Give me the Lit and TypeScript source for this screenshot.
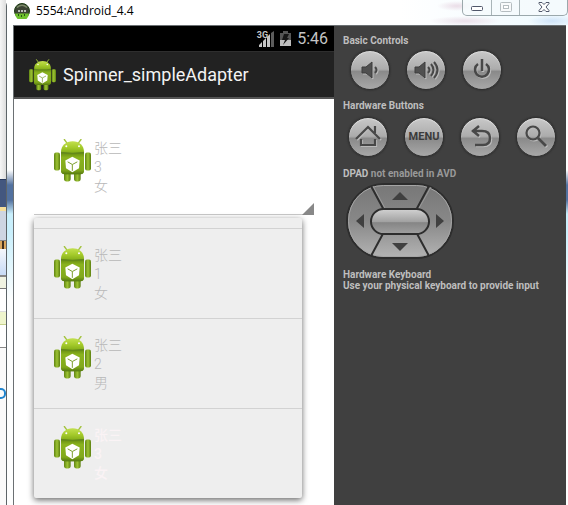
import { LitElement, html, svg, css } from "lit";
import { customElement } from "lit/decorators.js";

const people = [
  { name: "张三", id: "1", sex: "女", pressed: false },
  { name: "张三", id: "2", sex: "男", pressed: false },
  { name: "张三", id: "3", sex: "女", pressed: true },
];

@customElement("android-robot")
class AndroidRobot extends LitElement {
  static styles = css`
    :host { display: block; flex: none; width: 37px; height: 43px; }
    svg { display: block; width: 100%; height: 100%; }
  `;
  render() {
    return html`<svg viewBox="0 0 111 128" aria-hidden="true">
      <defs>
        <linearGradient id="head" x2="0" y2="1"><stop stop-color="#c3e04f"/><stop offset=".55" stop-color="#a5cb2c"/><stop offset="1" stop-color="#86b01a"/></linearGradient>
        <linearGradient id="body" x2="0" y2="1"><stop stop-color="#6d9413"/><stop offset=".2" stop-color="#8ab31e"/><stop offset=".8" stop-color="#82a91c"/><stop offset="1" stop-color="#567a10"/></linearGradient>
        <linearGradient id="arm"><stop stop-color="#5f8412"/><stop offset=".5" stop-color="#9dc333"/><stop offset="1" stop-color="#5c7f10"/></linearGradient>
      </defs>
      <path d="M31 1 39 12M81 1 73 12" stroke="#a3c33f" stroke-width="4" stroke-linecap="round"/>
      <rect x="30" y="92" width="20" height="35" rx="8" fill="url(#arm)"/>
      <rect x="60" y="92" width="20" height="35" rx="8" fill="url(#arm)"/>
      <rect x="0" y="40" width="18" height="54" rx="6" fill="url(#arm)"/>
      <rect x="93" y="40" width="18" height="54" rx="6" fill="url(#arm)"/>
      <path d="M21 36h69v58q0 11-11 11H32q-11 0-11-11Z" fill="#64891a"/>
      <path d="M21 38C21 19 36 6 56 6s34 13 34 32q-34 5-69 0Z" fill="url(#head)"/>
      <path d="M21 43q35 5 69 0v51q0 11-11 11H32q-11 0-11-11Z" fill="url(#body)"/>
      <circle cx="37" cy="21" r="3" fill="#fff"/><circle cx="75" cy="21" r="3" fill="#fff"/>
      <path d="M55 53 77 64 75 87 55 99 36 87 34 64Z" fill="#fff"/>
      <path d="M41 68 55 76 70 68M55 76V95" fill="none" stroke="#7d9f2d" stroke-width="3"/>
    </svg>`;
  }
}

@customElement("person-row")
class PersonRow extends LitElement {
  static properties = { person: { attribute: false } };
  declare person: { name: string; id: string; sex: string; pressed: boolean };
  static styles = css`
    :host { display: flex; gap: 3px; align-items: flex-start; }
    .lines { font: 300 14px/19px Roboto, "Noto Sans CJK SC", sans-serif; color: #b8b8b8; text-align: left; }
    .lines span { display: block; height: 19px; }
    .pressed { color: #faf3f5; font-weight: 500; }
  `;
  render() {
    const p = this.person;
    return html`<android-robot></android-robot>
      <div class="lines ${p.pressed ? "pressed" : ""}"><span>${p.name}</span><span>${p.id}</span><span>${p.sex}</span></div>`;
  }
}

const glyphs = {
  low: svg`<path d="M12 17h4l6-5v16l-6-5h-4Z" fill="#505050" stroke="#3c3c3c"/><path d="M25 17q3 3 0 6" fill="none" stroke="#484848" stroke-width="2"/>`,
  high: svg`<path d="M9 17h4l6-5v16l-6-5H9Z" fill="#505050" stroke="#3c3c3c"/><path d="M22 17q3 3 0 6M25 14q5 6 0 12M28 12q7 8 0 16" fill="none" stroke="#484848" stroke-width="2"/>`,
  power: svg`<path d="M16 14a7 7 0 1 0 8 0M20 9v12" fill="none" stroke="#484848" stroke-width="2.500"/>`,
  home: svg`<path d="M8 22 20 10 32 22M13 22v6h14v-6M27 9v7" fill="none" stroke="#484848" stroke-width="2.200"/>`,
  back: svg`<path d="M12 14h10q8 0 8 7t-7 7h-8M19 9l-6 5 6 5" fill="none" stroke="#484848" stroke-width="2.500"/>`,
  search: svg`<circle cx="17" cy="16" r="6.500" fill="none" stroke="#484848" stroke-width="2.200"/><path d="M22 21 30 29" stroke="#484848" stroke-width="3"/>`,
};

@customElement("app-root")
class AppRoot extends LitElement {
  static styles = css`
    * { box-sizing: border-box; }
    :host { display: block; height: 100vh; overflow: hidden; font-family: Roboto, "Noto Sans CJK SC", sans-serif; }
    button { padding: 0; border: 0; background: none; font: inherit; color: inherit; display: block; }
    svg { display: block; }
    .desktop { display: grid; grid-template-columns: 6px minmax(0, 1fr); height: 100%; }
    .behind { display: flex; flex-direction: column; background: #fafafa; overflow: hidden; }
    .blank { height: 179px; background: linear-gradient(90deg, #f6f6f6, #ddd); }
    .navy { height: 28px; background: #43577f; border-top: 1px solid #26385c; }
    .gold { height: 4px; background: #f7df9a; }
    .steel { height: 30px; background: #ced5e2; border-bottom: 1px solid #888; }
    .ember { height: 8px; background: repeating-linear-gradient(90deg, #daa75e 0 2px, #403020 2px 4px); }
    .sky { height: 28px; background: linear-gradient(#f5f7fb, #c8dbf6); border-bottom: 2px solid #888; }
    .cream { height: 12px; background: #f0f3e2; border-bottom: 1px solid #777; }
    .white { height: 23px; background: #fff; border-bottom: 1px solid #ddd; }
    .lime { height: 13px; background: #eff5cd; border-bottom: 1px solid #c7d28d; }
    .page { height: 23px; background: #fff; border-bottom: 1px solid #888; }
    .link { height: 11px; margin-top: 40px; width: 6px; border-radius: 0 5px 5px 0; border: 2px solid #2084ce; border-left: 0; }
    .window { display: flex; flex-direction: column; border-left: 1px solid #5d6468; border-top-left-radius: 6px; min-width: 0; background: linear-gradient(#fdfefe 170px, #52719f 185px 200px, #c9effc 214px 232px, #fdfefe 300px); }
    .titlebar { flex: none; height: 25px; display: flex; align-items: flex-start; padding-left: 7px;
      background: radial-gradient(ellipse 20px 5px at 450px 6px, #eadde7, transparent), radial-gradient(ellipse 36px 5px at 458px 21px, #eadfe9, transparent), radial-gradient(ellipse 24px 6px at 545px 21px, #cfe3f8, transparent), linear-gradient(90deg, #fff 70%, #effaff); }
    .title { display: flex; align-items: center; gap: 6px; margin: 0; height: 22px; flex: 1; font: 400 12px/22px "Open Sans", sans-serif; color: #000; }
    .controls { display: flex; height: 16px; border: 1px solid #9ba8ac; border-top: 0; border-radius: 0 0 5px 5px; background: #f5fafccc; }
    .controls button { width: 28px; height: 13px; display: grid; place-items: center; }
    .controls button + button { border-left: 1px solid #a9b5b8; height: 15px; padding-bottom: 2px; }
    .controls button:last-child { width: 48px; }
    .frame { flex: 1; display: grid; grid-template-columns: minmax(0, 320fr) minmax(0, 232fr); border: solid #6b7073; border-width: 1px 0 0 1px; margin-left: 6px; margin-right: 2px; }
    .phone { background: #fff; min-width: 0; }
    .status { height: 25px; background: #000; color: #c4c4c4; display: flex; justify-content: flex-end; align-items: center; padding-right: 6px; gap: 6px; font-size: 16px; line-height: 25px; }
    .signal { display: flex; }
    .signal small { font: 700 9px/9px Roboto, sans-serif; margin-right: -10px; }
    .appbar { height: 48px; background: #222; border-top: 1px solid #2e2e2e; border-bottom: 2px solid #555; display: flex; align-items: center; gap: 7px; padding-left: 15px; color: #f3f3f3; }
    .appbar android-robot { width: 27px; height: 32px; }
    .appbar h1 { margin: 0; font-size: 18px; font-weight: 400; line-height: 24px; }
    .content { padding: 20px; }
    .spinner { position: relative; }
    .current { width: 100%; height: 96px; padding: 20px; border-bottom: 1px solid #c9c9c9; }
    .current::after { content: ""; position: absolute; right: 0; top: 84px; border-left: 12px solid transparent; border-bottom: 12px solid #888; }
    .list { position: absolute; top: 99px; left: 0; right: 12px; margin: 0; padding: 10px 0 0; list-style: none; background: #eee; border-radius: 2px; box-shadow: 0 2px 6px #0009; }
    .list li { border-top: 1px solid #d2d2d2; }
    .list button { width: 100%; height: 89px; padding: 17px 20px; }
    .list person-row, .current person-row { height: 55px; }
    .side { background: #404040; color: #bebebe; padding: 9px; font: 700 10px/11px Roboto, sans-serif; min-width: 0; }
    h2, p { font: inherit; margin: 0; }
    .off { color: #999; }
    .keys { display: flex; gap: 16px; }
    .basic { margin: 4px 0 10px 7px; }
    .hardware { margin: 6px 0 11px 5px; }
    .key { flex: none; width: 40px; height: 40px; border-radius: 50%; border: 1px solid #303030; background: linear-gradient(#c8c8c8, #acacac 48%, #8a8a8a 54%, #a8a8a8); color: #3b3b3b; font: 700 11px/38px Roboto, sans-serif; text-align: center; box-shadow: inset 0 1px 1px #ddd, 0 0 2px #222; }
    .key svg { margin: -1px; filter: drop-shadow(1px 1px 0 #bbb); }
    .dpad { margin: 4px 0 10px 3px; }
  `;

  key(label: string, glyph: unknown) {
    return html`<button class="key" aria-label=${label}><svg width="40" height="40" viewBox="0 0 40 40">${glyph}</svg></button>`;
  }

  render() {
    return html`<div class="desktop">
      <div class="behind" aria-hidden="true">
        <div class="blank"></div><div class="navy"></div><div class="gold"></div><div class="steel"></div><div class="ember"></div>
        <div class="sky"></div><div class="cream"></div><div class="white"></div><div class="lime"></div><div class="page"></div><div class="link"></div>
      </div>
      <main class="window">
        <header class="titlebar">
          <div class="title">
            <svg width="16" height="16" viewBox="0 0 16 16" aria-hidden="true">
              <circle cx="8" cy="8" r="7.500" fill="#3c4434" stroke="#1c3c12"/>
              <path d="M1 10.500h14A7 7 0 0 1 1 10.500" fill="#6fc22e"/>
              <path d="M3 4.500Q8 0 13 4.500" fill="none" stroke="#7c8b68" stroke-width="1.500"/>
              <path d="M4 8h2M7 8h2M10 8h2" stroke="#e8e8e8" stroke-width="1.500"/>
              <path d="M4 12h1M7 13h1M10 12h1" stroke="#255616" stroke-width="2"/>
            </svg>
            <span>5554:Android_4.4</span>
          </div>
          <div class="controls">
            <button aria-label="Minimize"><svg width="12" height="12"><rect x=".5" y="5.500" width="11" height="4" rx="1" fill="#fff" stroke="#50576a"/></svg></button>
            <button aria-label="Maximize"><svg width="12" height="12"><rect x=".5" y="1.500" width="11" height="9" rx="1" fill="#f8fafb" stroke="#b5bdc0"/><rect x="3.500" y="4.500" width="5" height="3" fill="#fff" stroke="#b5bdc0"/></svg></button>
            <button aria-label="Close"><svg width="12" height="12" viewBox="0 0 12 12"><path d="M1 1.500h3l2 2 2-2h3v1L8 6l3 3.500v1H8l-2-2-2 2H1v-1L4 6 1 2.500Z" fill="#fff" stroke="#50576a"/></svg></button>
          </div>
        </header>
        <div class="frame">
          <section class="phone">
            <div class="status">
              <div class="signal"><small>3G</small><svg width="16" height="16" viewBox="0 0 16 16"><path d="M1 16v-2l3-3v5ZM5 16v-6l3-3v9ZM9 16V6l3-3v13Z" fill="#c5c5c5"/><path d="M13 16V2l3-2v16Z" fill="#5c5c5c"/></svg></div>
              <svg width="11" height="16" viewBox="0 0 11 16"><path d="M3 0h5v2h3v7H0V2h3Z" fill="#555"/><path d="M0 9h11v6H0Z" fill="#bdbdbd"/><path d="M4 3h5L7 7h2l-6 7 2-5H2Z" fill="#161616"/></svg>
              <span>5:46</span>
            </div>
            <div class="appbar"><android-robot></android-robot><h1>Spinner_simpleAdapter</h1></div>
            <div class="content">
              <div class="spinner">
                <button class="current" aria-haspopup="true" aria-expanded="true"><person-row .person=${{ name: "张三", id: "3", sex: "女", pressed: false }}></person-row></button>
                <ul class="list">${people.map((p) => html`<li><button><person-row .person=${p}></person-row></button></li>`)}</ul>
              </div>
            </div>
          </section>
          <aside class="side">
            <h2>Basic Controls</h2>
            <div class="keys basic">${this.key("Volume down", glyphs.low)}${this.key("Volume up", glyphs.high)}${this.key("Power", glyphs.power)}</div>
            <h2>Hardware Buttons</h2>
            <div class="keys hardware">${this.key("Home", glyphs.home)}<button class="key">MENU</button>${this.key("Back", glyphs.back)}${this.key("Search", glyphs.search)}</div>
            <h2>DPAD <span class="off">not enabled in AVD</span></h2>
            <svg class="dpad" width="108" height="76" viewBox="0 0 108 76" role="img" aria-label="Directional pad">
              <defs>
                <linearGradient id="pad" x2="0" y2="1"><stop stop-color="#777"/><stop offset=".5" stop-color="#888"/><stop offset="1" stop-color="#b4b4b4"/></linearGradient>
                <linearGradient id="ok" x2="0" y2="1"><stop stop-color="#d2d2d2"/><stop offset=".5" stop-color="#a2a2a2"/><stop offset=".55" stop-color="#858585"/><stop offset="1" stop-color="#a0a0a0"/></linearGradient>
              </defs>
              <rect x="1" y="1" width="106" height="74" rx="37" fill="url(#pad)" stroke="#2d2d2d" stroke-width="2"/>
              <rect x="2.500" y="2.500" width="103" height="71" rx="35" fill="none" stroke="#a5a5a5"/>
              <path d="M25 3 39 29M83 3 69 29M39 47 25 73M69 47 83 73" stroke="#2d2d2d" stroke-width="2"/>
              <path d="M27 3 40 27M85 4 72 27" stroke="#999"/>
              <rect x="25" y="26" width="58" height="25" rx="12.500" fill="url(#ok)" stroke="#2d2d2d" stroke-width="2"/>
              <path d="M46 17 54 9l8 8ZM46 60h16l-8 8ZM18 31v14l-8-7ZM90 31v14l8-7Z" fill="#404040"/>
            </svg>
            <h2>Hardware Keyboard</h2>
            <p>Use your physical keyboard to provide input</p>
          </aside>
        </div>
      </main>
    </div>`;
  }
}
